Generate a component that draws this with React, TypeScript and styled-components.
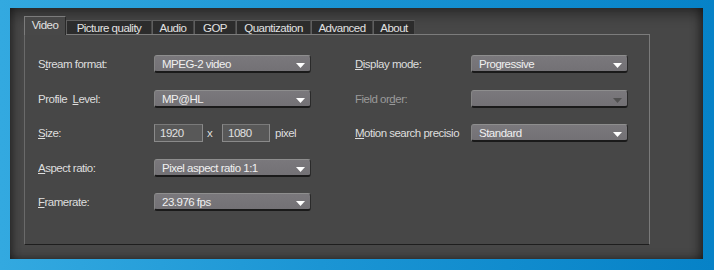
import { FC } from "react";
import styled, { createGlobalStyle } from "styled-components";

const GlobalStyle = createGlobalStyle`
  html, body {
    margin: 0;
    padding: 0;
  }
  body {
    width: 714px;
    height: 270px;
    overflow: hidden;
    font-family: "Liberation Sans", Arial, sans-serif;
  }
`;

interface Tab {
  label: string;
  width: number;
}

const tabs: Tab[] = [
  { label: "Video", width: 42 },
  { label: "Picture quality", width: 86 },
  { label: "Audio", width: 42 },
  { label: "GOP", width: 42 },
  { label: "Quantization", width: 75 },
  { label: "Advanced", width: 62 },
  { label: "About", width: 42 },
];

// label text with one underlined access key
const Mnemonic: FC<{ text: string; at: number }> = ({ text, at }) => (
  <>
    {text.slice(0, at)}
    <u>{text[at]}</u>
    {text.slice(at + 1)}
  </>
);

const Arrow: FC<{ disabled?: boolean }> = ({ disabled }) => (
  <ArrowIcon width="9" height="5" viewBox="0 0 9 5">
    <path d="M0 0h9L4.5 5z" fill={disabled ? "#505050" : "#ffffff"} />
  </ArrowIcon>
);

const Combo: FC<{ value?: string; disabled?: boolean }> = ({ value, disabled }) => (
  <ComboBox>
    <span>{value}</span>
    <Arrow disabled={disabled} />
  </ComboBox>
);

export default function App() {
  return (
    <>
      <GlobalStyle />
      <Frame>
        <Window>
          <TabStrip>
            {tabs.map((t, i) => (
              <TabButton key={t.label} $active={i === 0} style={{ width: t.width }}>
                {t.label}
              </TabButton>
            ))}
          </TabStrip>
          <Pane>
            <Column>
              <Row>
                <Label>
                  <Mnemonic text="Stream format:" at={1} />
                </Label>
                <Combo value="MPEG-2 video" />
              </Row>
              <Row>
                <Label>
                  <Mnemonic text="Profile  Level:" at={9} />
                </Label>
                <Combo value="MP@HL" />
              </Row>
              <Row>
                <Label>
                  <Mnemonic text="Size:" at={0} />
                </Label>
                <SizeGroup>
                  <NumberBox $w={49}>1920</NumberBox>
                  <Times>x</Times>
                  <NumberBox $w={48}>1080</NumberBox>
                  <Unit>pixel</Unit>
                </SizeGroup>
              </Row>
              <Row>
                <Label>
                  <Mnemonic text="Aspect ratio:" at={0} />
                </Label>
                <Combo value="Pixel aspect ratio 1:1" />
              </Row>
              <Row>
                <Label>
                  <Mnemonic text="Framerate:" at={0} />
                </Label>
                <Combo value="23.976 fps" />
              </Row>
            </Column>
            <Column>
              <Row>
                <Label>
                  <Mnemonic text="Display mode:" at={0} />
                </Label>
                <Combo value="Progressive" />
              </Row>
              <Row>
                <Label $disabled>
                  <Mnemonic text="Field order:" at={8} />
                </Label>
                <Combo disabled />
              </Row>
              <Row>
                <Label>
                  <Mnemonic text="Motion search precisio" at={0} />
                </Label>
                <Combo value="Standard" />
              </Row>
            </Column>
          </Pane>
        </Window>
      </Frame>
    </>
  );
}

const Frame = styled.div`
  width: 714px;
  height: 270px;
  box-sizing: border-box;
  padding: 8px 11px 11px 10px;
  background: linear-gradient(90deg, #33a9e0 0%, #1b95d4 45%, #0682c7 100%);
`;

const Window = styled.div`
  height: 100%;
  box-sizing: border-box;
  padding: 8px 0 0 14px;
  background: #474747;
  box-shadow: inset 0 9px 14px -4px rgba(0, 0, 0, 0.45), inset 8px 0 10px -6px rgba(0, 0, 0, 0.35),
    inset -10px 0 10px -6px rgba(0, 0, 0, 0.35), inset 0 -6px 8px -4px rgba(0, 0, 0, 0.3);
  font-size: 11.5px;
  letter-spacing: -0.5px;
  color: #dedede;
`;

const TabStrip = styled.div`
  display: flex;
  align-items: flex-end;
  height: 18px;
  position: relative;
  z-index: 1;
`;

const TabButton = styled.div<{ $active?: boolean }>`
  box-sizing: border-box;
  display: flex;
  align-items: center;
  justify-content: center;
  height: ${(p) => (p.$active ? "19px" : "14px")};
  margin-bottom: ${(p) => (p.$active ? "-1px" : "0")};
  padding-bottom: ${(p) => (p.$active ? "2px" : "0")};
  background: ${(p) => (p.$active ? "#484848" : "#2c2c2c")};
  border-top: 1px solid ${(p) => (p.$active ? "#7c7c7c" : "#5e5e5e")};
  border-left: 1px solid ${(p) => (p.$active ? "#7c7c7c" : "#5e5e5e")};
  border-right: 1px solid ${(p) => (p.$active ? "#2a2a2a" : "#4a4a4a")};
  color: #e2e2e2;
  white-space: nowrap;
`;

const Pane = styled.div`
  box-sizing: border-box;
  width: 626px;
  height: 211px;
  border-top: 1px solid #7c7c7c;
  border-left: 1px solid #6a6a6a;
  border-right: 1px solid #7a7a7a;
  border-bottom: 1px solid #1e1e1e;
  padding: 20px 0 0 13px;
  display: flex;
  gap: 44px;
`;

const Column = styled.div`
  display: grid;
  grid-template-columns: 116px 157px;
  grid-auto-rows: 18px;
  row-gap: 16.5px;
  align-content: start;
`;

const Row = styled.div`
  display: contents;
`;

const Label = styled.div<{ $disabled?: boolean }>`
  display: flex;
  align-items: center;
  white-space: pre;
  overflow: hidden;
  color: ${(p) => (p.$disabled ? "#9a9a9a" : "#dedede")};
`;

const ComboBox = styled.div`
  box-sizing: border-box;
  display: flex;
  align-items: center;
  justify-content: space-between;
  height: 18px;
  padding: 1px 5px 0 7px;
  border-radius: 3px;
  background: linear-gradient(#7a787c, #737175);
  border-top: 1px solid #8e8e8e;
  border-left: 1px solid #858585;
  border-right: 1px solid #2a2a2a;
  border-bottom: 2px solid #1a1a1a;
  color: #f0f0f0;
`;

const ArrowIcon = styled.svg`
  display: block;
  margin-top: 3px;
`;

const SizeGroup = styled.div`
  display: flex;
  align-items: center;
`;

const NumberBox = styled.div<{ $w: number }>`
  box-sizing: border-box;
  width: ${(p) => p.$w}px;
  height: 18px;
  display: flex;
  align-items: center;
  padding-left: 5px;
  background: #585858;
  border: 1px solid #8a8a8a;
  border-top-color: #7a7a7a;
  color: #e0e0e0;
`;

const Times = styled.span`
  width: 19px;
  padding-left: 4px;
  box-sizing: border-box;
`;

const Unit = styled.span`
  padding-left: 5px;
`;
